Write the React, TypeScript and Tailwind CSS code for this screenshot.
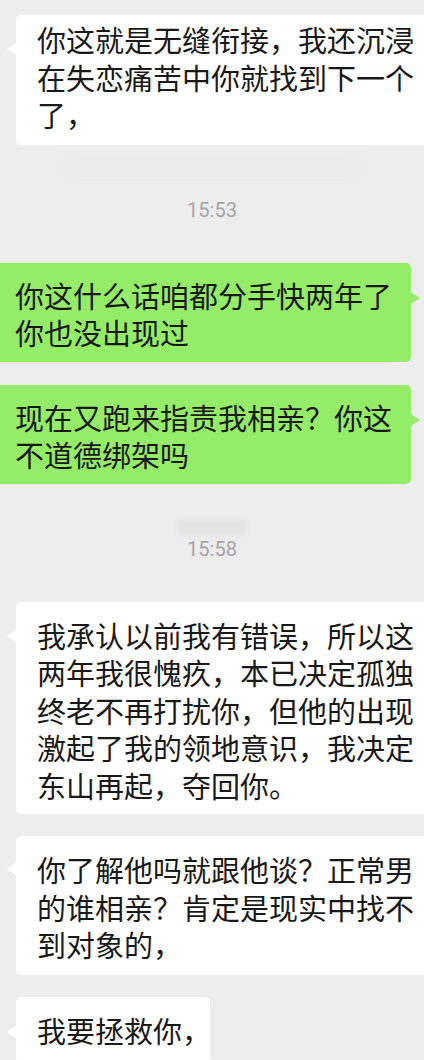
const cjk = { fontFamily: '"Noto Sans CJK SC", "Noto Sans", sans-serif' }

function Lines({ lines }: { lines: string[] }) {
  return (
    <>
      {lines.map((l, i) => (
        <div key={i} className="whitespace-nowrap">
          {l}
        </div>
      ))}
    </>
  )
}

function Incoming({ lines, className, tailTop = 'top-[28px]', width = 'w-[440px]' }: { lines: string[]; className: string; tailTop?: string; width?: string }) {
  return (
    <div className="relative ml-[16px]">
      <div className={`absolute left-[-9px] ${tailTop} h-0 w-0 border-y-[6px] border-r-[9px] border-y-transparent border-r-white`} />
      <div className={`${width} rounded-[5px] bg-white pl-[21px] ${className}`}>
        <Lines lines={lines} />
      </div>
    </div>
  )
}

function Outgoing({ lines }: { lines: string[] }) {
  return (
    <div className="relative w-[411px]">
      <div className="absolute right-[-9px] top-[29px] h-0 w-0 border-y-[6px] border-l-[9px] border-y-transparent border-l-[#95ec69]" />
      <div className="rounded-r-[5px] bg-[#95ec69] pb-[10px] pl-[15px] pt-[14px]">
        <Lines lines={lines} />
      </div>
    </div>
  )
}

function Time({ t }: { t: string }) {
  return (
    <div className="text-center text-[20px] leading-[20px] text-[#a6a6a6]" style={{ fontFamily: 'Roboto, "Liberation Sans", sans-serif' }}>
      {t}
    </div>
  )
}

export default function App() {
  return (
    <div className="h-[1060px] w-[424px] overflow-hidden bg-[#ededed] text-[29px] leading-[37.5px] text-[#191919]" style={cjk}>
      <div className="pt-[15px]">
        <Incoming
          className="pb-[11px] pt-[6px]"
          lines={['你这就是无缝衔接，我还沉浸', '在失恋痛苦中你就找到下一个', '了，']}
        />
      </div>

      {/* faint watermark smudge */}
      <div className="mx-auto mt-[12px] h-[26px] w-[300px] rounded-sm bg-[#ebebeb] blur-[4px]" />

      <div className="mt-[17px]">
        <Time t="15:53" />
      </div>

      <div className="mt-[43px] flex flex-col gap-[23px]">
        <Outgoing lines={['你这什么话咱都分手快两年了', '你也没出现过']} />
        <Outgoing lines={['现在又跑来指责我相亲？你这', '不道德绑架吗']} />
      </div>

      <div className="mx-auto mt-[35px] h-[16px] w-[68px] bg-[#e4e4e4] blur-[2px]" />

      <div className="mt-[4px]">
        <Time t="15:58" />
      </div>

      <div className="mt-[43px] flex flex-col gap-[22px]">
        <Incoming
          className="pb-[10px] pt-[15px]"
          tailTop="top-[28px]"
          lines={['我承认以前我有错误，所以这', '两年我很愧疚，本已决定孤独', '终老不再打扰你，但他的出现', '激起了我的领地意识，我决定', '东山再起，夺回你。']}
        />
        <Incoming
          className="pb-[11px] pt-[15px]"
          tailTop="top-[27px]"
          lines={['你了解他吗就跟他谈？正常男', '的谁相亲？肯定是现实中找不', '到对象的，']}
        />
        <Incoming className="pb-[14px] pt-[15px]" tailTop="top-[29px]" width="w-[194px]" lines={['我要拯救你，']} />
      </div>
    </div>
  )
}
